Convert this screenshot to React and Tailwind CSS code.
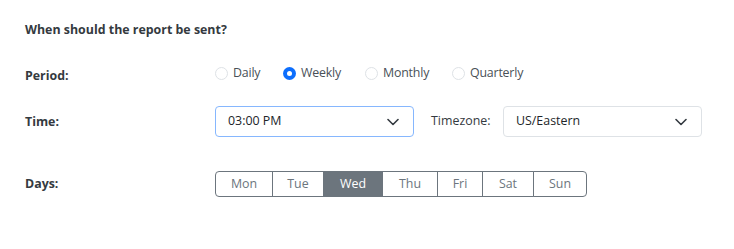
import React from "react";

const days = [
  { d: "Mon", w: "w-[58px]", cls: "rounded-l-[4px]" },
  { d: "Tue", w: "w-[52px]", cls: "" },
  { d: "Wed", w: "w-[60px]", cls: "", active: true },
  { d: "Thu", w: "w-[56px]", cls: "" },
  { d: "Fri", w: "w-[46px]", cls: "" },
  { d: "Sat", w: "w-[52px]", cls: "" },
  { d: "Sun", w: "w-[54px]", cls: "rounded-r-[4px]" },
];

const periods = [
  { p: "Daily", w: "w-[68px]" },
  { p: "Weekly", w: "w-[82px]", checked: true },
  { p: "Monthly", w: "w-[87px]" },
  { p: "Quarterly", w: "w-[80px]" },
];

function Chevron() {
  return (
    <svg width="12" height="8" viewBox="0 0 12 8" fill="none" className="shrink-0">
      <path d="M1 1.5 L6 6.5 L11 1.5" stroke="#343a40" strokeWidth="1.6" strokeLinecap="round" strokeLinejoin="round" />
    </svg>
  );
}

export default function App() {
  return (
    <div className="w-[734px] h-[249px] bg-white px-[25px] pt-[21px] text-[12.4px] text-[#343a40]" style={{ fontFamily: '"Open Sans", "Liberation Sans", sans-serif' }}>
      <div className="h-[18px] leading-[18px] font-bold text-[#343a40]">When should the report be sent?</div>

      <div className="mt-[23px] flex items-start h-[22px]">
        <div className="w-[190px] pt-[5px] leading-[18px] font-bold">Period:</div>
        <div className="flex items-center h-[22px] text-[#495057]">
          {periods.map((o) => (
            <label key={o.p} className={o.w + " flex items-center gap-[5px] leading-[18px] tracking-[-0.2px]"}>
              {o.checked ? (
                <span className="w-[13px] h-[13px] rounded-full bg-[#0d6efd] flex items-center justify-center shrink-0">
                  <span className="w-[5px] h-[5px] rounded-full bg-white" />
                </span>
              ) : (
                <span className="w-[13px] h-[13px] rounded-full border border-[#dee2e6] bg-white shrink-0" />
              )}
              <span>{o.p}</span>
            </label>
          ))}
        </div>
      </div>

      <div className="mt-[22px] flex items-center h-[31px]">
        <div className="w-[190px] font-bold leading-[18px]">Time:</div>
        <div className="w-[199px] h-[31px] rounded-[4px] border border-[#86b7fe] flex items-center justify-between pl-[12px] pr-[14px] text-[#212529]">
          <span>03:00 PM</span>
          <Chevron />
        </div>
        <div className="ml-[17px] w-[72px] text-[#343a40]">Timezone:</div>
        <div className="w-[199px] h-[31px] rounded-[4px] border border-[#dee2e6] flex items-center justify-between pl-[12px] pr-[14px] text-[#212529]">
          <span>US/Eastern</span>
          <Chevron />
        </div>
      </div>

      <div className="mt-[34px] flex items-center h-[26px]">
        <div className="w-[190px] font-bold leading-[18px]">Days:</div>
        <div className="flex">
          {days.map((x, i) => (
            <div
              key={x.d}
              className={
                x.w + " h-[26px] flex items-center justify-center border border-[#6c757d] " + x.cls + " " + (i > 0 ? "-ml-px " : "") +
                (x.active ? "bg-[#6c757d] text-white" : "bg-white text-[#6c757d]")
              }
            >
              {x.d}
            </div>
          ))}
        </div>
      </div>
    </div>
  );
}
